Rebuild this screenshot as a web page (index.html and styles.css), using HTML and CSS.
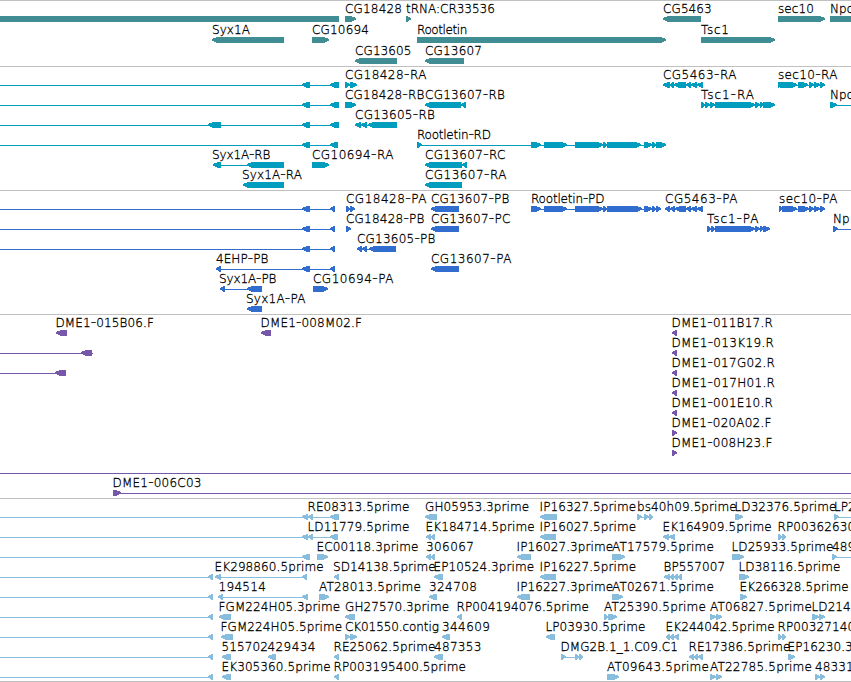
FILE: index.html
```html
<!DOCTYPE html>
<html lang="en">
<head>
<meta charset="utf-8">
<title>Genome browser</title>
<link rel="stylesheet" href="styles.css">
</head>
<body>
<main class="browser" id="browser"></main>
<script src="tracks.js"></script>
</body>
</html>
```
FILE: styles.css
```css
body {
  margin: 0;
  background: #fff;
}

.browser {
  display: flex;
  flex-direction: column;
  width: 851px;
  height: 682px;
  overflow: hidden;
  border-bottom: 1px solid #c0c0c0;
  box-sizing: border-box;
}

.track {
  flex: none;
  box-sizing: border-box;
  border-top: 1px solid #c0c0c0;
}

.track svg {
  display: block;
  width: 851px;
  height: 100%;
  overflow: hidden;
}

.track path {
  fill: currentColor;
  shape-rendering: crispEdges;
}

.track text {
  fill: #000;
  stroke: #000;
  stroke-width: 0.3px;
  font-family: "DejaVu Sans Light", "DejaVu Sans", sans-serif;
  font-size: 12px;
  font-weight: 200;
  letter-spacing: 0.1px;
}

.track .dash {
  font-size: 15px;
}

.genes { height: 66px; color: #408d93; }
.transcripts { height: 124px; color: #009dbf; }
.proteins { height: 124px; color: #306dce; }
.clones { height: 184px; color: #7657a9; }
.ests { height: 183px; color: #88bddd; }
```
FILE: tracks.js
```js
// Feature syntax: "label@x dir ~line segments", dir is <, > or = (no head).
// A label may carry its width as well: "label@x@width".
const tracks = [
  { name: "genes", step: 21, rows: [
    "= 0-339; CG18428@345@57 > 345-356; tRNA:CR33536@406@89 > 406-411; CG5463@663 < 663-701; sec10@778 > 778-825; Npc@830 = 830-851",
    "Syx1A@212@38 < 212-284; CG10694@312@57 > 312-329; Rootletin@417@50.5 > 417-666; Tsc1@701@28 > 701-775",
    "CG13605@355 < 355-397; CG13607@425@57 < 425-464"
  ]},
  { name: "transcripts", step: 20, rows: [
    "< ~0-339 302-310 330-339; CG18428-RA@345@81.5 > 345-350 350-357; CG5463-RA@663@73.5 < ~663-703 663-670 670-674 674-686 686-691 691-697 697-703; sec10-RA@778@59.5 > ~778-825 778-781 780-797 798-808 809-814 814-820 820-825",
    "< ~0-339 302-310 330-339; CG18428-RB@345@79.5 > 345-356; CG13607-RB@425@80 < 425-461 461-466; Tsc1-RA@701@53 > ~701-775 701-705 705-710 710-715 715-755 755-760 760-763 763-775; Npc@830 > ~830-851 830-837",
    "< ~0-339 208-221 302-310 330-339; CG13605-RB@355@80 < ~355-397 355-361 361-367 368-397",
    "< ~0-338 302-310 330-338; Rootletin-RD@417@74 > ~417-666 417-422 531-541 544-567 575-603 603-607 607-641 644-652 652-656 656-666",
    "Syx1A-RB@212@58.5 < ~213-284 213-221 247-284; CG10694-RA@312@81.5 > 312-329; CG13607-RC@425@80.5 < 425-462 462-467",
    "Syx1A-RA@242@60 < 243-284; CG13607-RA@425@81.5 < 425-462"
  ]},
  { name: "proteins", step: 20, rows: [
    "< ~0-335 302-310 330-335; CG18428-PA@346@80.5 > 346-350 350-355; CG13607-PB@431@78.5 < 431-459; Rootletin-PD@531@73.5 > ~531-661 531-541 544-567 575-603 603-607 607-642 644-652 652-656 656-661; CG5463-PA@665@72.5 < ~665-703 665-670 670-675 675-686 686-691 691-697 697-703; sec10-PA@779@58.5 > ~779-825 779-782 782-797 798-809 809-814 814-820 820-825",
    "< ~0-335 302-310 330-335; CG18428-PB@346@78.5 > 346-351; CG13607-PC@431@79.5 < 431-459; Tsc1-PA@707@51.5 > ~707-770 707-711 711-715 715-755 755-760 760-763 763-770; Np@833 > ~833-851 833-838",
    "< ~0-335 302-310 330-335; CG13605-PB@357@78.5 < ~357-396 357-362 362-367 369-396",
    "4EHP-PB@216@52.5 < ~216-335 216-221 302-310 330-335; CG13607-PA@431@80.5 < 431-459",
    "Syx1A-PB@219@57.5 < ~220-262 220-225 247-262; CG10694-PA@313@80.5 > 313-328",
    "Syx1A-PA@246@59.5 < 247-262"
  ]},
  { name: "clones", step: 20, rows: [
    "DME1-015B06.F@55.5@98.5 < 56-67; DME1-008M02.F@260.5@101.5 < 261-271; DME1-011B17.R@671.5@101.5 < 672-677",
    "< ~0-93 81-92; DME1-013K19.R@671.5@102.5 < 672-677",
    "< ~0-66 55-66; DME1-017G02.R@671.5@103.5 < 672-677",
    "DME1-017H01.R@671.5@103.5 < 672-677",
    "DME1-001E10.R@671.5@101.5 < 672-677",
    "DME1-020A02.F@671.5@100 > 672-677",
    "DME1-008H23.F@671.5@101 > 672-677",
    "= ~0-851",
    "DME1-006C03@112.5@89 > ~113-851 113-121"
  ]},
  { name: "ests", step: 20, rows: [
    "RE08313.5prime@307.5 < ~0-339 302-308 308-313 330-339; GH05953.3prime@425 < 425-437; IP16327.5prime@539.5 < 540-557; bs40h09.5prime@637 > ~637-653 637-642 644-649 649-653; LD32376.5prime@734.5 > 735-743; LP2@834 > ~834-851 834-839",
    "LD11779.5prime@307.5 < ~0-338 302-308 308-313 330-338; EK184714.5prime@425.5 < 426-431 431-435; IP16027.5prime@539.5 < 540-556; EK164909.5prime@662.5 < 663-669 669-675; RP00362630@777.5 > 778-782 782-786",
    "< ~0-310 302-310; EC00118.3prime@316.5 > 317-328; 306067@426@48 < 426-431 431-435; IP16027.3prime@516.5 < 517-531; AT17579.5prime@612@102 > 612-625; LD25933.5prime@731.5 > 732-744; 489@832 > ~832-851 832-837",
    "< ~0-213 208-213; EK298860.5prime@214.5 < ~215-307 215-221 302-307; SD14138.5prime@333 < 334-339; EP10524.3prime@433.5 < 434-443; IP16227.5prime@539.5 < 540-556; BP557007@663.5 < 664-670 670-674 674-678 678-682; LD38116.5prime@738.5 > 739-749",
    "< ~0-213 208-213; 194514@218.5@47.5 < ~218-308 218-223 302-308; AT28013.5prime@319@102 > 319-329; 324708@429@48 < 429-437; IP16227.3prime@516.5 < 517-530; AT02671.5prime@612@102 > 612-623; EK266328.5prime@739.5 > 740-747",
    "< ~0-213 208-213; FGM224H05.3prime@218.5 < 219-231; GH27570.3prime@345 < 345-355; RP004194076.5prime@456.5 < 457-462; AT25390.5prime@604@102 > 604-608 608-617; AT06827.5prime@710@102 > 710-716 716-722; LD214@811.5 > 812-819 819-825",
    "< ~0-213 208-213; FGM224H05.5prime@220.5 < 221-233; CK01550.contig@345@94 > 345-350 350-357; 344609@442@48 < 442-450; LP03930.5prime@545.5 < 546-555; EK244042.5prime@665.5 < 666-670 670-674 674-679; RP00327140@777.5 > 778-782 782-786",
    "< ~0-213 208-213; 515702@221.5 < 222-231; 429434@267.5@48 < 268-276; RE25062.5prime@333.5 < 334-339; 487353@434@47.5 < 434-443; DMG2B.1_1.C09.C1@560.5@117.5 > ~561-583 561-566 575-579 579-583; RE17386.5prime@688.5 < 689-694 694-698 698-703; EP16230.3@787.5 > 788-795",
    "< ~0-213 208-213; EK305360.5prime@221.5 < 222-231; RP003195400.5prime@333.5 < 334-339; AT09643.5prime@607@102 > 607-619; AT22785.5prime@710@102 > 710-716 716-722; 48331@815 > 815-820 820-825"
  ]}
];

function segment(dir, a, b, y) {
  const head = Math.min(6, b - a);
  if (dir === "<") {
    return `M${a} ${y + 2}L${a + head - 1} ${y}H${b}V${y + 6}H${a + head - 1}L${a} ${y + 3.6}Z`;
  }
  if (dir === ">") {
    return `M${a} ${y}H${b - head + 1}L${b} ${y + 2}V${y + 3.6}L${b - head + 1} ${y + 6}H${a}Z`;
  }
  return `M${a} ${y}H${b}V${y + 6}H${a}Z`;
}

function drawFeature(source, y) {
  let shape = "", label = "", dir = "=";
  for (const token of source.trim().split(" ")) {
    if (token.includes("@")) {
      const [text, x, width] = token.split("@");
      const length = width ? ` textLength="${width}"` : "";
      const content = text.replace("-", '<tspan class="dash">-</tspan>');
      label = `<text x="${x}" y="${y + 12}"${length}>${content}</text>`;
    } else if ("<>=".includes(token)) {
      dir = token;
    } else if (token[0] === "~") {
      const [a, b] = token.slice(1).split("-");
      shape += `M${a} ${y + 18}H${b}v1H${a}Z`;
    } else {
      const [a, b] = token.split("-").map(Number);
      shape += segment(dir, a, b, y + 15);
    }
  }
  const paths = shape.split("Z").filter(Boolean).map(d => `<path d="${d}Z"/>`).join("");
  return paths + label;
}

document.getElementById("browser").innerHTML = tracks.map(track => {
  const body = track.rows.map((row, i) =>
    row.split(";").map(f => drawFeature(f, i * track.step)).join("")).join("");
  return `<section class="track ${track.name}"><svg>${body}</svg></section>`;
}).join("");
```
